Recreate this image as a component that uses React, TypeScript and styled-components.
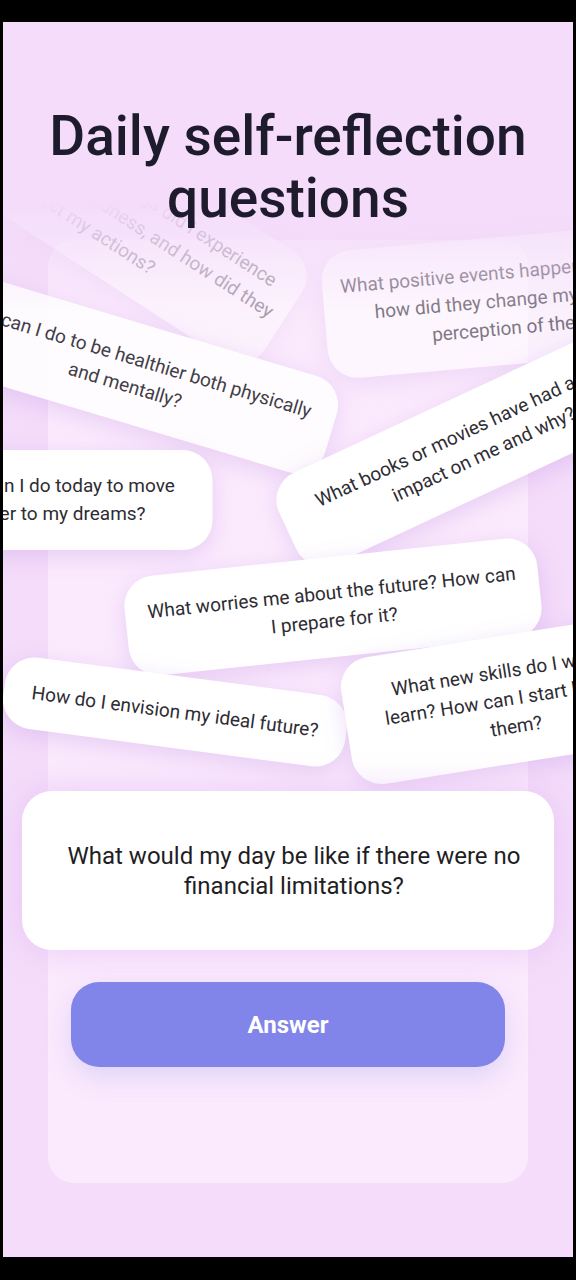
import styled, { createGlobalStyle } from "styled-components";

const Global = createGlobalStyle`
  html, body {
    margin: 0;
    padding: 0;
    background: #000;
  }
  * {
    box-sizing: border-box;
  }
`;

const Frame = styled.div`
  width: 576px;
  height: 1280px;
  padding: 22px 3px 23px;
  background: #000;
`;

const Screen = styled.div`
  position: relative;
  height: 100%;
  display: flex;
  flex-direction: column;
  overflow: hidden;
  background: #f4dcfa;
  font-family: Roboto, "Liberation Sans", sans-serif;
`;

const Title = styled.h1`
  position: relative;
  z-index: 3;
  margin: 0;
  padding-top: 83px;
  font-size: 55px;
  line-height: 62px;
  font-weight: 500;
  text-align: center;
  color: #1d1b2c;
`;

const TopFade = styled.div`
  position: absolute;
  z-index: 2;
  top: 0;
  left: 0;
  right: 0;
  height: 290px;
  background: linear-gradient(
    to bottom,
    #f4dcfa 0%,
    #f4dcfa 62%,
    rgba(244, 220, 250, 0.5) 78%,
    rgba(244, 220, 250, 0) 100%
  );
  pointer-events: none;
`;

const Deck = styled.div`
  position: absolute;
  z-index: 1;
  inset: 0;
  pointer-events: none;
`;

interface BubbleProps {
  $x: number;
  $y: number;
  $w: number;
  $rot: number;
  $fade?: number;
}

const Bubble = styled.div<BubbleProps>`
  position: absolute;
  left: ${(p) => p.$x}px;
  top: ${(p) => p.$y}px;
  width: ${(p) => p.$w}px;
  transform: translate(-50%, -50%) rotate(${(p) => p.$rot}deg);
  opacity: ${(p) => p.$fade ?? 1};
  padding: 22px 18px;
  border-radius: 30px;
  background: #fff;
  box-shadow: 0 6px 22px rgba(196, 150, 228, 0.35);
  font-size: 19px;
  line-height: 28px;
  color: #2e2c33;
  text-align: center;
  white-space: nowrap;
`;

const Panel = styled.div`
  flex: 1;
  margin: 11px 45px 74px;
  padding-bottom: 116px;
  display: flex;
  flex-direction: column;
  justify-content: flex-end;
  border-radius: 26px;
  background: #fbeafd;
`;

const QuestionCard = styled.div`
  position: relative;
  z-index: 2;
  height: 159px;
  margin: 0 -26px;
  padding-left: 12px;
  display: flex;
  align-items: center;
  justify-content: center;
  border-radius: 30px;
  background: #fff;
  box-shadow: 0 0 34px rgba(226, 186, 244, 0.7);
  font-size: 24px;
  line-height: 30px;
  color: #1f1e24;
  text-align: center;
`;

const AnswerButton = styled.button`
  height: 85px;
  margin: 32px 23px 0;
  border: none;
  border-radius: 28px;
  background: #8185ea;
  box-shadow: 0 10px 26px rgba(129, 133, 234, 0.22);
  font-family: Roboto, "Liberation Sans", sans-serif;
  font-size: 24px;
  font-weight: 700;
  color: #fff;
  cursor: pointer;
`;

const questions = [
  {
    x: 100, y: 182, w: 430, rot: 33, fade: 0.4,
    lines: ["What emotions and feelings did I experience", "today, such as joy or sadness, and how did they", "affect my actions?"],
  },
  {
    x: 511, y: 278, w: 380, rot: -5, fade: 0.6,
    lines: ["What positive events happened today and", "how did they change my mood or", "perception of them?"],
  },
  {
    x: 126, y: 350, w: 422, rot: 16.7, fade: 0.9,
    lines: ["What can I do to be healthier both physically", "and mentally?"],
  },
  {
    x: 52, y: 478, w: 315, rot: 0,
    lines: ["What can I do today to move", "closer to my dreams?"],
  },
  {
    x: 475, y: 420, w: 420, rot: -25,
    lines: ["What books or movies have had a strong", "impact on me and why?"],
  },
  {
    x: 330, y: 585, w: 415, rot: -6,
    lines: ["What worries me about the future? How can", "I prepare for it?"],
  },
  {
    x: 172, y: 690, w: 345, rot: 7.5,
    lines: ["How do I envision my ideal future?"],
  },
  {
    x: 509, y: 677, w: 335, rot: -9,
    lines: ["What new skills do I want to", "learn? How can I start learning", "them?"],
  },
];

export default function App() {
  return (
    <Frame>
      <Global />
      <Screen>
        <TopFade />
        <Title>
          Daily self-reflection
          <br />
          questions
        </Title>
        <Deck>
          {questions.map((q, i) => (
            <Bubble key={i} $x={q.x} $y={q.y} $w={q.w} $rot={q.rot} $fade={q.fade}>
              {q.lines.map((l, j) => (
                <div key={j}>{l}</div>
              ))}
            </Bubble>
          ))}
        </Deck>
        <Panel>
          <QuestionCard>
            What would my day be like if there were no
            <br />
            financial limitations?
          </QuestionCard>
          <AnswerButton>Answer</AnswerButton>
        </Panel>
      </Screen>
    </Frame>
  );
}
